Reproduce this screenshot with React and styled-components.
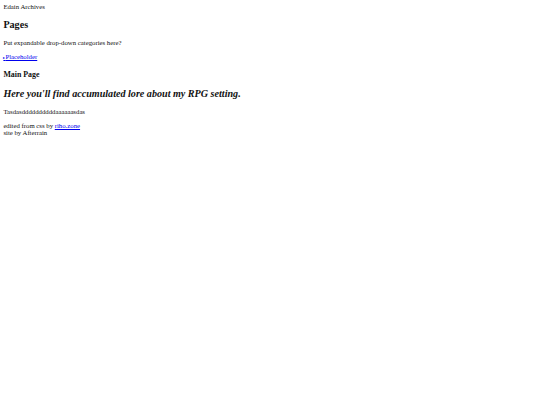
import React from "react";
import styled, { createGlobalStyle } from "styled-components";

const K = 0.421875;
const s = (n) => `${(n * K).toFixed(3)}px`;
const LH = 1.12;

const Global = createGlobalStyle`
  html, body { margin: 0; padding: 0; background: #fff; }
  body { font-family: "Liberation Serif", "Times New Roman", serif; color: #000; }
`;

const Page = styled.div`
  padding: ${s(8)};
  font-size: ${s(16)};
  line-height: ${LH};
  font-family: "Liberation Serif", "Times New Roman", serif;
  color: #111;
`;

const SiteTitle = styled.div``;

const SectionTitle = styled.h2`
  font-size: ${s(24)};
  line-height: ${LH};
  font-weight: bold;
  margin: ${s(19.92)} 0;
  font-style: ${(p) => (p.$italic ? "italic" : "normal")};
`;

const SubTitle = styled.h3`
  font-size: ${s(18.72)};
  line-height: ${LH};
  font-weight: bold;
  margin: ${s(23)} 0 ${s(14)};
`;

const Para = styled.p`
  margin: ${s(16)} 0;
`;

const Footer = styled.p`
  margin: ${s(10)} 0;
  line-height: 1.1;
`;

const Link = styled.a`
  color: #0000ee;
  text-decoration: underline;
`;

const Marker = styled.span`
  font-size: ${s(10)};
`;

export default function App() {
  return (
    <>
      <Global />
      <Page>
        <SiteTitle>Edain Archives</SiteTitle>
        <SectionTitle>Pages</SectionTitle>
        <Para>Put expandable drop-down categories here?</Para>
        <Para>
          <Link href="#"><Marker>▸</Marker>Placeholder</Link>
        </Para>
        <SubTitle>Main Page</SubTitle>
        <SectionTitle $italic>Here you'll find accumulated lore about my RPG setting.</SectionTitle>
        <Para>Tasdasddddddddddaaaaaasdas</Para>
        <Footer>
          edited from css by <Link href="#">riho.zone</Link>
          <br />
          site by Afterrain
        </Footer>
      </Page>
    </>
  );
}
